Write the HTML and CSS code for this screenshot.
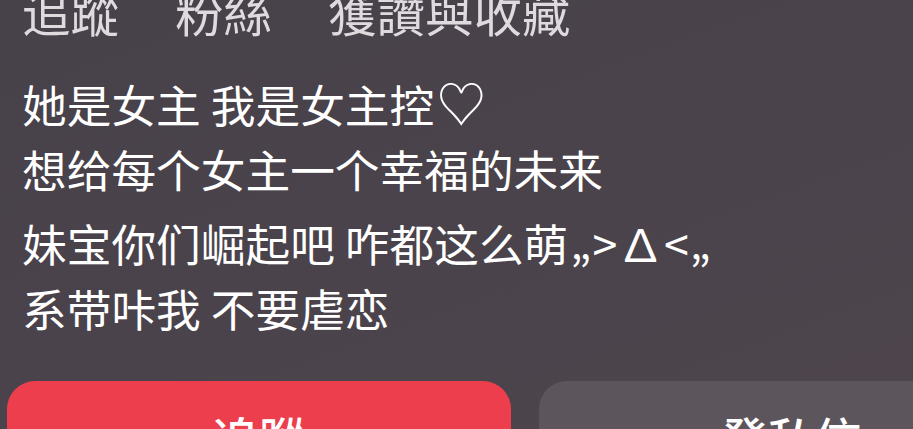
FILE: index.html
```html
<!DOCTYPE html>
<html lang="zh">
<head>
<meta charset="utf-8">
<link rel="stylesheet" href="styles.css">
</head>
<body>
<div class="page">
  <div class="stats">
    <span class="stat">追蹤</span>
    <span class="stat">粉絲</span>
    <span class="stat">獲讚與收藏</span>
  </div>
  <div class="bio">
    <p class="para">她是女主 我是女主控<span class="heart">♡</span><br>想给每个女主一个幸福的未来</p>
    <p class="para">妹宝你们崛起吧 咋都这么萌<span class="kao">„&gt;∆&lt;„</span><br>系带咔我 不要虐恋</p>
  </div>
  <div class="actions">
    <div class="btn btn-follow">追蹤</div>
    <div class="btn btn-msg">發私信</div>
  </div>
</div>
</body>
</html>
```

FILE: styles.css
```css
html, body {
  margin: 0;
  padding: 0;
}
body {
  width: 913px;
  height: 429px;
  overflow: hidden;
  background: linear-gradient(160deg, #47414a 0%, #4a434b 50%, #4e454c 100%);
  font-family: "Noto Sans CJK SC", "Noto Sans CJK TC", sans-serif;
}
.page {
  padding-left: 22px;
}
.stats {
  display: flex;
  gap: 56px;
  margin-top: -13px;
  font-family: "Noto Sans CJK TC", "Noto Sans CJK SC", sans-serif;
  font-size: 48.5px;
  line-height: 48.5px;
  color: #dedade;
}
.bio {
  margin-top: 36.5px;
  color: #ffffff;
  font-size: 44.7px;
  line-height: 64.5px;
}
.para {
  margin: 0 0 10px 0;
  white-space: nowrap;
}
.heart {
  font-family: "Noto Sans CJK SC", sans-serif;
  display: inline-block;
  font-size: 50px;
  line-height: 0;
  margin-left: 2px;
}
.kao {
  letter-spacing: 1px;
  margin-left: 2px;
}
.actions {
  display: flex;
  gap: 28px;
  margin-top: 41px;
  margin-left: -15px;
  width: 1100px;
}
.btn {
  flex: 0 0 504px;
  height: 100px;
  border-radius: 28px;
  box-sizing: border-box;
  padding-top: 32px;
  text-align: center;
  font-family: "Noto Sans CJK TC", sans-serif;
  font-size: 47px;
  line-height: 47px;
  font-weight: 500;
  color: #ffffff;
}
.btn-follow {
  background: #ec3e4d;
}
.btn-msg {
  background: #5d555c;
}
```
